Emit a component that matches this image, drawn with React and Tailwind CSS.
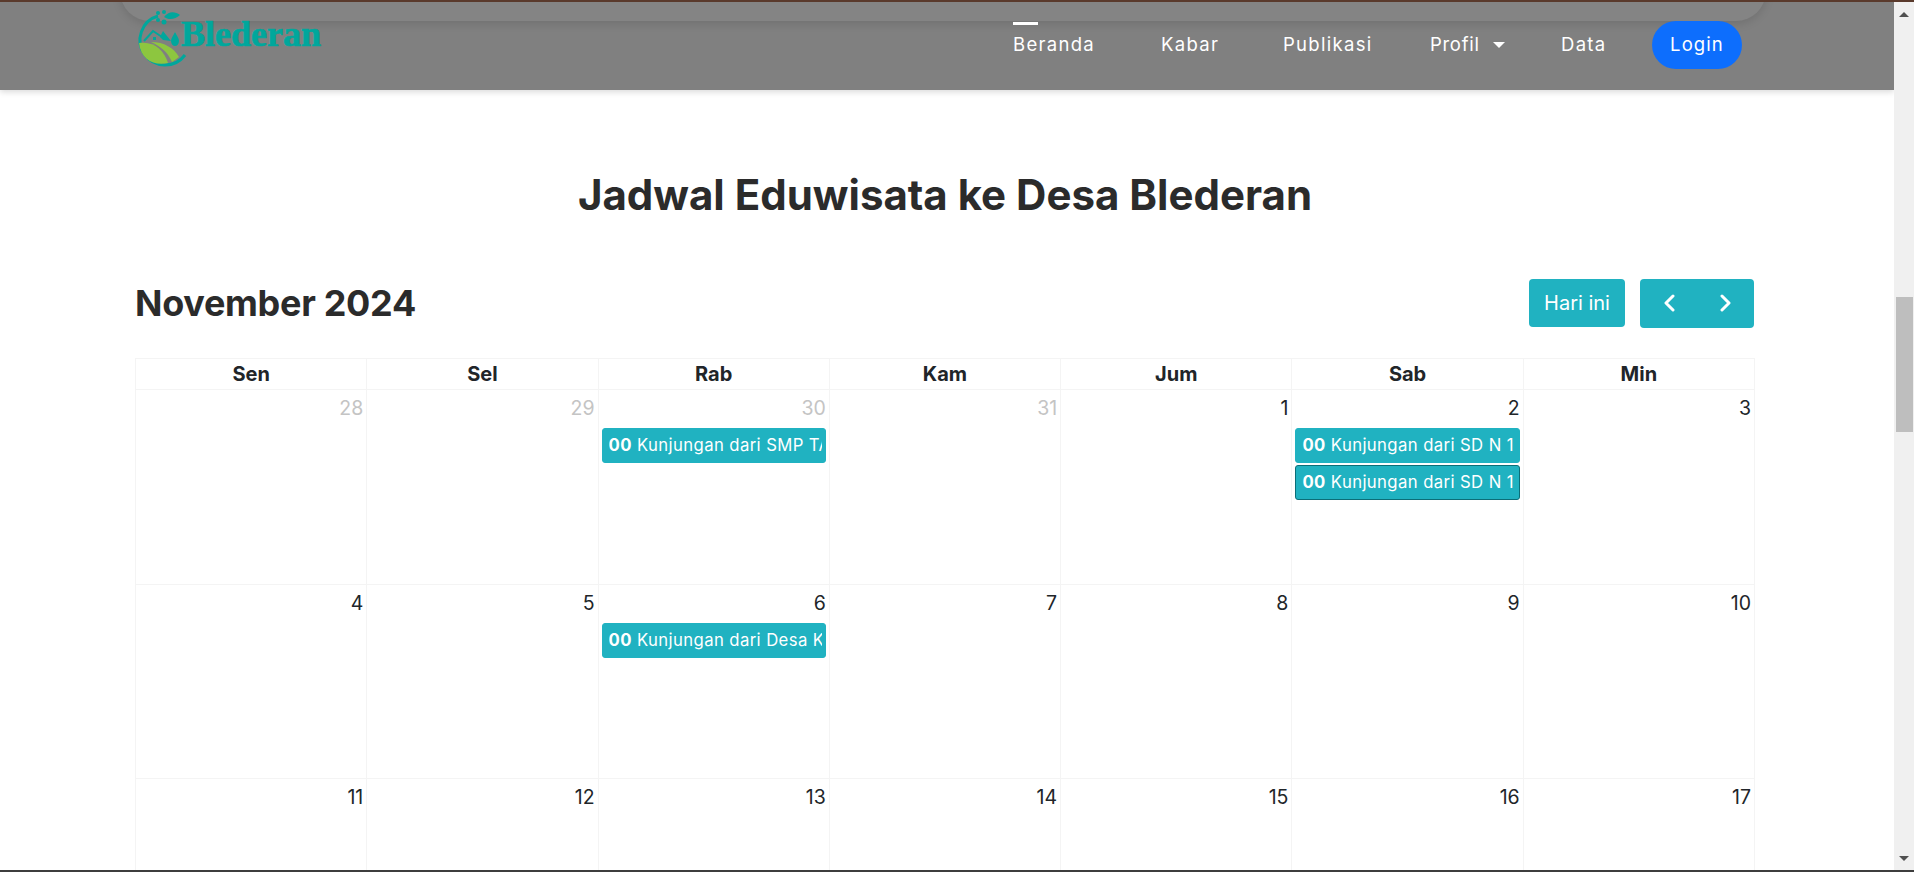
const FONT = "font-['Inter','Noto_Sans',sans-serif]";

const NAV = [
	{ label: 'Beranda', w: 'w-[84px]', active: true },
	{ label: 'Kabar', w: 'w-[58px]' },
	{ label: 'Publikasi', w: 'w-[87px]' },
];

const HEADS = ['Sen', 'Sel', 'Rab', 'Kam', 'Jum', 'Sab', 'Min'];

const WEEKS = [
	[
		{ d: 28, muted: true },
		{ d: 29, muted: true },
		{ d: 30, muted: true, events: ['Kunjungan dari SMP TARUNA Magelang'] },
		{ d: 31, muted: true },
		{ d: 1 },
		{ d: 2, events: ['Kunjungan dari SD N 1 Blederan', 'Kunjungan dari SD N 1 Blederan'] },
		{ d: 3 },
	],
	[
		{ d: 4 },
		{ d: 5 },
		{ d: 6, events: ['Kunjungan dari Desa Kaliangkrik'] },
		{ d: 7 },
		{ d: 8 },
		{ d: 9 },
		{ d: 10 },
	],
	[{ d: 11 }, { d: 12 }, { d: 13 }, { d: 14 }, { d: 15 }, { d: 16 }, { d: 17 }],
];

const Logo = () => (
	<div className="flex items-center">
		<svg width="56" height="60" viewBox="0 0 56 60" className="shrink-0">
			<path d="M24 6 A25 25 0 1 0 51 45" fill="none" stroke="#00a79c" strokeWidth="3" />
			<path d="M30 7 C34 1 41 1 46 5 C41 10 34 10 30 7Z" fill="#00a79c" />
			<circle cx="24" cy="3" r="2" fill="#00a79c" />
			<circle cx="30" cy="2" r="2" fill="#00a79c" />
			<circle cx="24" cy="10" r="2" fill="#00a79c" />
			<circle cx="30" cy="12" r="2.5" fill="#00a79c" />
			<path d="M10 31 L19 21 L28 27" fill="none" stroke="#00a79c" strokeWidth="2" />
			<path d="M26 27 L29 21 L37 31 L29 30Z" fill="#00a79c" />
			<rect x="19" y="27" width="3" height="3" fill="#00a79c" />
			<path d="M41 22 C43 26 45 28 45 31 C45 34 43 36 41 36 C39 36 37 34 37 31 C37 28 39 26 41 22Z" fill="#00a79c" />
			<path d="M5 33 C20 31 30 40 34 53 C20 56 7 50 5 33Z" fill="#8dc63f" />
			<path d="M17 32 C30 32 40 38 45 47 L38 52 C34 42 26 36 17 32Z" fill="#8dc63f" />
		</svg>
		<span className="-ml-[9px] -mt-[12px] font-['Liberation_Serif',serif] text-[36px] font-bold leading-none text-[#00a79c] [-webkit-text-stroke:0.7px_#00a79c]">
			Blederan
		</span>
	</div>
);

const Navbar = () => (
	<header className="relative h-[88px] shrink-0 bg-[#808080] pl-[134px] pr-[152px] shadow-[0_2px_6px_rgba(0,0,0,0.15)]">
		<div className="absolute left-[120px] top-[-30px] h-[49px] w-[1646px] rounded-b-[30px] bg-[#848484] shadow-[0_3px_10px_rgba(0,0,0,0.12)]" />
		<div className="relative flex h-full items-start justify-between">
			<div className="pt-[8px]">
				<Logo />
			</div>
			<nav className="flex items-center pt-[19px] text-[18.5px] tracking-[1.3px] text-white">
				{NAV.map(item => (
					<a key={item.label} className={`relative mr-[64px] whitespace-nowrap ${item.w}`}>
						{item.active && <span className="absolute left-0 top-[-9px] h-[3px] w-[25px] bg-white" />}
						{item.label}
					</a>
				))}
				<a className="-ml-[4px] mr-[60px] flex w-[71px] items-center whitespace-nowrap tracking-[0.7px]">
					Profil
					<span className="ml-[13px] h-0 w-0 border-x-[6px] border-t-[6px] border-x-transparent border-t-white" />
				</a>
				<a className="mr-[45px] w-[46px]">Data</a>
				<a className="flex h-[48px] w-[90px] items-center justify-center rounded-[24px] bg-[#0d6efd] tracking-[1.1px]">Login</a>
			</nav>
		</div>
	</header>
);

const EventChip = ({ title, focused }) => (
	<div className={`mx-[3px] mb-[2px] h-[35px] rounded-[3px] border bg-[#20b2c1] pl-[6px] pr-[3px] text-[16.7px] leading-[33px] tracking-[0.4px] text-white ${focused ? 'border-[#0b6e78]' : 'border-[#20b2c1]'}`}>
		<div className="overflow-hidden whitespace-nowrap">
			<b className="font-bold">00</b> {title}
		</div>
	</div>
);

const Calendar = () => (
	<div className="grid w-[1620px] grid-cols-7 border-l border-t border-[#f4f4f4]">
		{HEADS.map(h => (
			<div key={h} className="h-[31px] border-b border-r border-[#f4f4f4] text-center text-[20px] font-bold leading-[30px] text-[#212529]">
				{h}
			</div>
		))}
		{WEEKS.flat().map(day => (
			<div key={day.d} className="h-[194.5px] border-b border-r border-[#f4f4f4]">
				<div className={`pr-[3px] pt-[5px] text-right text-[19.5px] leading-[27px] ${day.muted ? 'text-[#c4c4c4]' : 'text-[#212529]'}`}>
					{day.d}
				</div>
				<div className="mt-[6px]">
					{day.events && day.events.map((title, i) => (
						<EventChip key={i} title={title} focused={i === 1} />
					))}
				</div>
			</div>
		))}
	</div>
);

const ChevronLeft = () => (
	<svg width="12" height="18" viewBox="0 0 12 18" fill="none" stroke="white" strokeWidth="3" strokeLinecap="round" strokeLinejoin="round">
		<path d="M10 2 L3 9 L10 16" />
	</svg>
);

const ChevronRight = () => (
	<svg width="12" height="18" viewBox="0 0 12 18" fill="none" stroke="white" strokeWidth="3" strokeLinecap="round" strokeLinejoin="round">
		<path d="M2 2 L9 9 L2 16" />
	</svg>
);

const Scrollbar = () => (
	<div className="flex w-[20px] shrink-0 flex-col items-center bg-[#f0f0f0]">
		<span className="mt-[10px] h-0 w-0 border-x-[5px] border-b-[5px] border-x-transparent border-b-[#505050]" />
		<div className="mt-[280px] h-[135px] w-[17px] bg-[#bebebe]" />
		<span className="mt-auto mb-[9px] h-0 w-0 border-x-[5px] border-t-[5px] border-x-transparent border-t-[#505050]" />
	</div>
);

export default function App() {
	return (
		<div className={`flex h-[872px] flex-col overflow-hidden bg-white ${FONT}`}>
			<div className="h-[2px] shrink-0 bg-[#5a3a2c]" />
			<div className="flex min-h-0 flex-1">
				<main className="min-w-0 flex-1 overflow-hidden">
					<Navbar />
					<div className="pl-[135px] pt-[77px]">
						<h1 className="w-[1620px] text-center text-[42px] font-bold leading-[56px] text-[#2b2b2b]">
							Jadwal Eduwisata ke Desa Blederan
						</h1>
						<div className="mt-[55px] flex h-[50px] w-[1620px] items-center justify-between">
							<h2 className="-mt-[1px] text-[36px] font-bold tracking-[-0.3px] text-[#2b2b2b]">November 2024</h2>
							<div className="mr-[1px] flex items-start">
								<button className="h-[48px] w-[96px] rounded-[4px] bg-[#20b2c1] text-[20px] text-white">Hari ini</button>
								<div className="ml-[15px] flex h-[49px] w-[114px] items-center justify-center gap-[45px] rounded-[4px] bg-[#20b2c1]">
									<ChevronLeft />
									<ChevronRight />
								</div>
							</div>
						</div>
						<div className="mt-[30px]">
							<Calendar />
						</div>
					</div>
				</main>
				<Scrollbar />
			</div>
			<div className="h-[2px] shrink-0 bg-[#3d3d3d]" />
		</div>
	);
}
